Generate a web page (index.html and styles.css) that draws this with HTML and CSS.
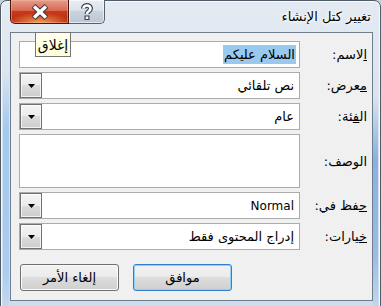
FILE: index.html
```html
<!DOCTYPE html>
<html dir="rtl" lang="ar">
<head>
  <meta charset="utf-8">
  <title>تغيير كتل الإنشاء</title>
  <link rel="stylesheet" href="styles.css">
</head>
<body>
  <div class="window">
    <div class="titlebar">
      <div class="title">تغيير كتل الإنشاء</div>
      <div class="caption-buttons">
        <div class="cap-btn help">
          <svg width="14" height="18" viewBox="0 0 14 18">
            <path d="M3.5 5.5 C3.5 1.5 10.5 1.5 10.5 5.5 C10.5 8.5 7 8 7 11" fill="none" stroke="#3b4652" stroke-width="5"/>
            <rect x="4.5" y="12.5" width="5" height="4.5" fill="#3b4652"/>
            <path d="M3.5 5.5 C3.5 1.5 10.5 1.5 10.5 5.5 C10.5 8.5 7 8 7 11" fill="none" stroke="#fff" stroke-width="2.6"/>
            <rect x="5.7" y="13.5" width="2.6" height="2.5" fill="#fff"/>
          </svg>
        </div>
        <div class="cap-btn close">
          <svg width="20" height="16" viewBox="0 0 20 16">
            <path d="M3.5 2 L16.5 14 M16.5 2 L3.5 14" stroke="#4a3a38" stroke-width="5.6"/>
            <path d="M4.1 2.6 L15.9 13.4 M15.9 2.6 L4.1 13.4" stroke="#fff" stroke-width="3.4"/>
          </svg>
        </div>
      </div>
    </div>

    <div class="client">
      <form class="fields">
        <div class="row">
          <div class="label"><span><u>ا</u>لاسم:</span></div>
          <div class="box"><span class="sel">السلام عليكم</span></div>
        </div>
        <div class="row">
          <div class="label"><span><u>م&zwj;</u>&zwj;عرض:</span></div>
          <div class="box combo">
            <span>نص تلقائي</span>
            <span class="drop"><svg width="7" height="4" viewBox="0 0 7 4"><polygon points="0,0 7,0 3.5,4" fill="#000"/></svg></span>
          </div>
        </div>
        <div class="row">
          <div class="label"><span>ال&zwj;<u>&zwj;ف&zwj;</u>&zwj;ئة:</span></div>
          <div class="box combo">
            <span>عام</span>
            <span class="drop"><svg width="7" height="4" viewBox="0 0 7 4"><polygon points="0,0 7,0 3.5,4" fill="#000"/></svg></span>
          </div>
        </div>
        <div class="row tall">
          <div class="label"><span>الوصف:</span></div>
          <div class="box"></div>
        </div>
        <div class="row">
          <div class="label"><span><u>ح&zwj;</u>&zwj;فظ في:</span></div>
          <div class="box combo">
            <span class="latin">Normal</span>
            <span class="drop"><svg width="7" height="4" viewBox="0 0 7 4"><polygon points="0,0 7,0 3.5,4" fill="#000"/></svg></span>
          </div>
        </div>
        <div class="row">
          <div class="label"><span><u>خ&zwj;</u>&zwj;يارات:</span></div>
          <div class="box combo">
            <span>إدراج المحتوى فقط</span>
            <span class="drop"><svg width="7" height="4" viewBox="0 0 7 4"><polygon points="0,0 7,0 3.5,4" fill="#000"/></svg></span>
          </div>
        </div>
      </form>
      <div class="buttons">
        <button class="btn default">موافق</button>
        <button class="btn">إلغاء الأمر</button>
      </div>
    </div>

    <div class="tooltip">إغلاق</div>
  </div>
</body>
</html>
```

FILE: styles.css
```css
html {
  direction: rtl;
}
body {
  margin: 0;
  width: 381px;
  height: 306px;
  overflow: hidden;
  background: #c3cfdb;
  font-family: "DejaVu Sans", sans-serif;
  font-size: 13px;
  color: #000;
}
.window {
  position: relative;
  height: 320px;
  box-sizing: border-box;
  border: 1px solid #4f5b68;
  border-radius: 7px 7px 0 0;
  background:
    linear-gradient(180deg, rgba(150, 195, 240, 0) 22%, rgba(150, 195, 240, .8) 40%, rgba(160, 200, 240, .8) 85%, rgba(150, 195, 240, 0) 100%) left 2px top 0 / 6px 100% no-repeat,
    linear-gradient(180deg, rgba(110, 160, 220, 0) 30%, rgba(110, 160, 220, .75) 50%, rgba(120, 165, 220, .6) 80%, rgba(110, 160, 220, 0) 100%) right 2px top 0 / 5px 100% no-repeat,
    linear-gradient(180deg, #e3eaf2 0%, #dbe4ee 30%, #ccdcee 100%);
  box-shadow: inset 0 0 0 1px rgba(255, 255, 255, .75);
}
.titlebar {
  height: 31px;
  display: flex;
  justify-content: space-between;
  align-items: flex-start;
  padding: 0 9px 0 9px;
}
.title {
  padding-top: 8px;
  font-size: 13px;
  text-shadow: 0 0 5px #fff, 0 0 3px #fff, 0 0 2px #fff;
}
.caption-buttons {
  display: flex;
  margin-top: -1px;
}
.cap-btn {
  height: 24px;
  box-sizing: border-box;
  border: 1px solid #56616e;
  border-top: none;
  display: flex;
  align-items: center;
  justify-content: center;
}
.help {
  width: 36px;
  border-left: none;
  border-radius: 0 0 5px 0;
  background: linear-gradient(180deg, #e9eef4 0%, #dae2eb 45%, #c9d3de 50%, #bcc8d5 100%);
  box-shadow: inset 0 0 0 1px rgba(255, 255, 255, .6);
}
.close {
  width: 59px;
  border-color: #4a140b;
  border-radius: 0 0 0 5px;
  background:
    radial-gradient(ellipse 55% 45% at 50% 100%, rgba(245, 170, 90, .95) 0%, rgba(240, 140, 70, 0) 100%),
    linear-gradient(180deg, #e39c8b 0%, #d76b55 45%, #c8381b 50%, #b9290c 100%);
  box-shadow: inset 0 0 0 1px rgba(255, 190, 170, .45);
}
.client {
  height: 269px;
  box-sizing: border-box;
  margin: 0 7px 0 9px;
  background: #f0f0f0;
  border: 1px solid #6f7d8c;
  padding: 8px 0 9px 8px;
}
.fields {
  display: flex;
  flex-direction: column;
  gap: 4px;
  margin: 0;
}
.row {
  display: flex;
  height: 27px;
}
.row.tall {
  height: 54px;
}
.label {
  width: 72px;
  flex: none;
  box-sizing: border-box;
  padding-right: 5px;
  display: flex;
  align-items: center;
}
.box {
  flex: 1;
  box-sizing: border-box;
  border: 1px solid #ababab;
  background: #fff;
  display: flex;
  align-items: center;
  padding-right: 3px;
}
.sel {
  background: #99c9ef;
  line-height: 19px;
  padding: 0 1px;
}
.combo {
  padding-right: 5px;
}
.latin {
  font-size: 12px;
}
.drop {
  margin-right: auto;
  align-self: stretch;
  width: 22px;
  box-sizing: border-box;
  border: 1px solid #707070;
  background: linear-gradient(180deg, #f4f4f4 0%, #ebebeb 50%, #dcdcdc 50%, #cdcdcd 100%);
  box-shadow: inset 0 0 0 1px rgba(255, 255, 255, .7);
  display: flex;
  align-items: center;
  justify-content: center;
}
.drop svg {
  display: block;
}
.buttons {
  display: flex;
  justify-content: flex-end;
  gap: 14px;
  margin-top: 14px;
  padding-left: 1px;
}
.btn {
  width: 99px;
  height: 27px;
  box-sizing: border-box;
  border: 1px solid #707070;
  border-radius: 3px;
  background: linear-gradient(180deg, #f2f2f2 0%, #ebebeb 50%, #dddddd 50%, #cfcfcf 100%);
  box-shadow: inset 0 0 0 1px #fbfbfb;
  font-family: "DejaVu Sans", sans-serif;
  font-size: 13px;
  color: #000;
  padding: 0;
}
.btn.default {
  border-color: #2f7ed0;
  box-shadow: inset 0 0 0 1px #8fd3f5;
}
.tooltip {
  position: absolute;
  left: 34px;
  top: 31px;
  width: 36px;
  height: 25px;
  box-sizing: border-box;
  border: 1px solid #767676;
  background: linear-gradient(180deg, #ffffee 0%, #ffffdc 100%);
  font-size: 14px;
  display: flex;
  align-items: center;
  justify-content: center;
}
```
